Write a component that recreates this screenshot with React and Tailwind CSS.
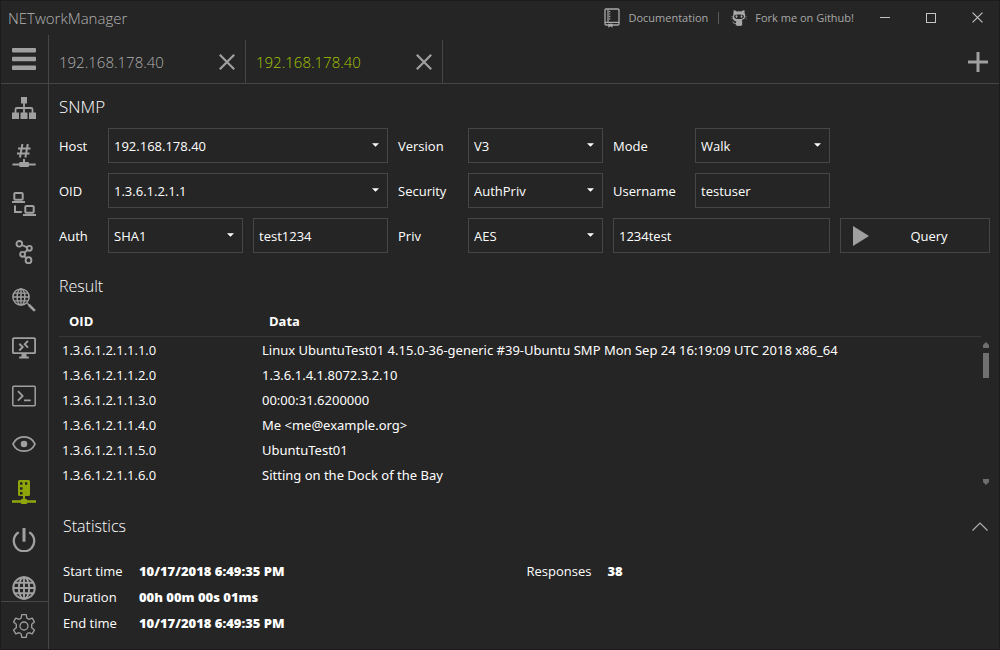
import { useState } from "react";

const LINE = "border-[#464646]";

function Svg({ children, size = "size-6", box = "0 0 24 24" }) {
  return (
    <svg viewBox={box} className={`${size} shrink-0`} fill="currentColor" aria-hidden="true">
      {children}
    </svg>
  );
}

const stroke = { fill: "none", stroke: "currentColor" };

const SitemapIcon = () => (
  <Svg>
    <path d="M9 1h6v6.500H9zM0 16.500h7V23H0zM8.500 16.500h7V23h-7zM17 16.500h7V23h-7z" />
    <path {...stroke} strokeWidth="1.800" d="M12 7v10M3.500 17v-3.500q0-1.500 1.500-1.500h14q1.500 0 1.500 1.500V17" />
  </Svg>
);

const SubnetIcon = () => (
  <Svg>
    <path {...stroke} strokeWidth="2" d="M10.400 0 8 13.500M15.800 0 13.400 13.500M6 4.500h12.500M5 9.500h12.500" />
    <path d="M11 15h2v3h3q1 0 1 1v.500h6.700v2H17v.500q0 1-1 1H8.200q-1 0-1-1v-.500H.500v-2h6.700V19q0-1 1-1H11z" />
  </Svg>
);

const ConnectionsIcon = () => (
  <Svg>
    <rect {...stroke} strokeWidth="2" x="2.300" y="1" width="8.400" height="6.800" rx="1" />
    <path d="M0 9h13v2H0zM11 22h13v2H11z" />
    <rect {...stroke} strokeWidth="2" x="13.300" y="14" width="8.400" height="6.800" rx="1" />
    <path {...stroke} strokeWidth="2" d="M3 13.500V20h6.800" />
  </Svg>
);

const RouteIcon = () => (
  <Svg>
    <g {...stroke} strokeWidth="1.900">
      <circle cx="7.300" cy="3.800" r="2.800" />
      <circle cx="17.400" cy="8.300" r="2.400" />
      <circle cx="10.600" cy="14.300" r="2.400" />
      <circle cx="16.500" cy="20.200" r="2.900" />
      <path d="m9.900 5 5.200 2.300M15.600 9.900l-3.200 2.800M12.200 16.100l2.200 2.100" />
    </g>
  </Svg>
);

const GlobeLines = () => (
  <>
    <circle cx="12" cy="12" r="10.800" />
    <ellipse cx="12" cy="12" rx="5.200" ry="10.800" />
    <path d="M12 1v22M1 12h22M2.800 6.800h18.400M2.800 17.200h18.400" />
  </>
);

const DnsSearchIcon = () => (
  <Svg>
    <g {...stroke} strokeWidth="1.900" transform="scale(.75)">
      <GlobeLines />
    </g>
    <path {...stroke} strokeWidth="1.600" d="m15.300 15.300 2 2" />
    <path {...stroke} strokeWidth="2.600" strokeLinecap="round" d="m17.500 17.500 4.600 4.600" />
  </Svg>
);

const RemoteDesktopIcon = () => (
  <Svg>
    <rect {...stroke} strokeWidth="1.800" x=".900" y="2.200" width="22.200" height="15" rx="1" />
    <path d="M9.500 18h5v2.500h2.300v2H7.200v-2h2.300z" />
    <path {...stroke} strokeWidth="1.900" d="m7.300 7.700 3.400 3.300L7.300 14.500M16 4.800l-3.300 3.400L16 11.600" />
  </Svg>
);

const ConsoleIcon = () => (
  <Svg>
    <rect {...stroke} strokeWidth="1.500" x=".800" y="2.300" width="22.400" height="19.400" rx="1" />
    <path {...stroke} strokeWidth="1.800" d="m6 7.200 4.600 4.800L6 16.600M12 16.300h6.700" />
  </Svg>
);

const EyeIcon = () => (
  <Svg>
    <path {...stroke} strokeWidth="1.800" d="M1 12C3 7.500 7 4.900 12 4.900S21 7.500 23 12c-2 4.500-6 7.100-11 7.100S3 16.500 1 12Z" />
    <circle cx="12" cy="12" r="3.300" />
  </Svg>
);

const SnmpIcon = () => (
  <Svg>
    <path
      fillRule="evenodd"
      d="M7.500 0h9Q18 0 18 1.500v13q0 1.500-1.500 1.500H13v3h1.500l1 1.200H24v2.600h-8.500l-1 1.200h-5l-1-1.200H0v-2.600h8.500l1-1.200H11v-3H7.500Q6 16 6 14.500v-13Q6 0 7.500 0ZM8 2.200v2.500h2.500V2.200ZM13 2.200v2.500h2.300V2.200ZM8 7.200v2.500h2.500V7.200ZM8 12v2.500h2.500V12Z"
    />
  </Svg>
);

const PowerIcon = () => (
  <Svg>
    <path {...stroke} strokeWidth="2.300" d="M6.700 4.300A10.200 10.200 0 1 0 17.300 4.300" />
    <path {...stroke} strokeWidth="3" d="M12 0v13.700" />
  </Svg>
);

const WebIcon = () => (
  <Svg>
    <g {...stroke} strokeWidth="1.900">
      <GlobeLines />
    </g>
  </Svg>
);

const GearIcon = () => (
  <Svg>
    <g {...stroke} strokeWidth="1.300" strokeLinejoin="round">
      <path d="M9.800.700h4.400l.7 3.500 1.900 1.100 3.400-1.200 2.200 3.800-2.700 2.300v3.600l2.700 2.300-2.200 3.800-3.400-1.200-1.900 1.100-.7 3.500H9.800l-.7-3.500-1.900-1.100-3.400 1.200-2.200-3.800 2.700-2.300v-3.600L1.600 7.900l2.200-3.800 3.400 1.200 1.900-1.100z" />
      <circle cx="12" cy="12" r="4" />
    </g>
  </Svg>
);

const BookIcon = () => (
  <Svg size="h-5 w-4" box="0 0 16 20">
    <rect {...stroke} strokeWidth="1.300" x="1" y="1" width="14" height="16" rx="1" />
    <path {...stroke} strokeWidth="1.200" d="M1 14.400h14M4 1.500v13" />
    <path d="M5 3h1.300v1.200H5zM5 5.400h1.300v1.200H5zM5 7.800h1.300V9H5zM5 10.200h1.300v1.200H5zM4.200 15.800h4.300V19.800L6.350 18.200 4.200 19.800z" />
  </Svg>
);

const OctocatIcon = () => (
  <Svg size="h-4 w-4" box="0 0 16 16">
    <path
      fillRule="evenodd"
      d="M2.600.200q1.900.1 3.200 1.200 2.200-.4 4.400 0Q11.500.300 13.400.200q.5 1.500.1 2.900 1 1.400.8 3.200-.3 3-3.600 3.700l.5 1.400V15.500h-1.200V12.500l-.6-.2v3.500H8.300v-3.300h-.6v3.300H6.600v-3.500l-.6.200v3h-1.200v-1.700q-2.100.3-2.900-1.300l-.7-.9q1.100-.1 1.700.9.600.8 1.900.5l.5-1.500q-3.300-.7-3.600-3.700-.2-1.800.8-3.200-.4-1.400.1-2.900ZM5 4.700q-1.900.1-1.900 2.100 0 2.300 4.900 2.300t4.900-2.300q0-2-1.900-2.100-3-.3-6 0Z"
    />
    <path d="M6 10h4v5.800H6z" />
    <ellipse cx="5.500" cy="6.600" rx=".9" ry="1.300" />
    <ellipse cx="10.500" cy="6.600" rx=".9" ry="1.300" />
    <path {...stroke} strokeWidth=".4" d="M0 6.600l2 .2M.2 9l2-.8M16 6.600l-2 .2M15.800 9l-2-.8" />
  </Svg>
);

const CloseIcon = ({ size, width }) => (
  <Svg size={size} box="0 0 16 16">
    <path {...stroke} strokeWidth={width} d="m.800.800 14.400 14.400M15.200.800.800 15.200" />
  </Svg>
);

const tools = [
  ["IP Scanner", SitemapIcon],
  ["Subnet Calculator", SubnetIcon],
  ["Connections", ConnectionsIcon],
  ["Traceroute", RouteIcon],
  ["DNS Lookup", DnsSearchIcon],
  ["Remote Desktop", RemoteDesktopIcon],
  ["PuTTY", ConsoleIcon],
  ["Monitor", EyeIcon],
  ["SNMP", SnmpIcon],
  ["Wake on LAN", PowerIcon],
  ["HTTP Headers", WebIcon],
];

const results = [
  ["1.3.6.1.2.1.1.1.0", "Linux UbuntuTest01 4.15.0-36-generic #39-Ubuntu SMP Mon Sep 24 16:19:09 UTC 2018 x86_64"],
  ["1.3.6.1.2.1.1.2.0", "1.3.6.1.4.1.8072.3.2.10"],
  ["1.3.6.1.2.1.1.3.0", "00:00:31.6200000"],
  ["1.3.6.1.2.1.1.4.0", "Me <me@example.org>"],
  ["1.3.6.1.2.1.1.5.0", "UbuntuTest01"],
  ["1.3.6.1.2.1.1.6.0", "Sitting on the Dock of the Bay"],
];

function Select({ id, value, label, className = "" }) {
  return (
    <div className={`grid items-center ${className}`}>
      <select
        id={id}
        aria-label={label}
        defaultValue={value}
        className={`col-start-1 row-start-1 h-[35px] w-full appearance-none border ${LINE} bg-transparent pr-6 pl-[5px]`}
      >
        <option>{value}</option>
      </select>
      <svg
        viewBox="0 0 8 4"
        className="pointer-events-none col-start-1 row-start-1 mr-[9px] mb-0.5 h-1 w-[7px] justify-self-end"
        fill="currentColor"
        aria-hidden="true"
      >
        <path d="M0 0h8L4 4z" />
      </svg>
    </div>
  );
}

function TextBox({ id, value, label, className = "" }) {
  return (
    <input
      id={id}
      aria-label={label}
      type="text"
      defaultValue={value}
      className={`h-[35px] w-full min-w-0 border ${LINE} bg-transparent px-[5px] ${className}`}
    />
  );
}

function Tab({ host, active }) {
  return (
    <div className={`flex w-[197px] items-center justify-between border-r ${LINE} pr-2.5 pl-2.5`}>
      <button
        type="button"
        role="tab"
        aria-selected={active}
        className={`text-[15px] font-light ${active ? "text-[#a4c400]" : "text-[#b0b0b0]"}`}
      >
        {host}
      </button>
      <button type="button" aria-label="Close tab" className="text-[#a0a0a0]">
        <CloseIcon size="size-4" width="2.200" />
      </button>
    </div>
  );
}

function Stat({ name, value }) {
  return (
    <div className="flex">
      <dt className="shrink-0">{name}</dt>
      <dd className="font-extrabold">{value}</dd>
    </div>
  );
}

export default function App() {
  const [open, setOpen] = useState(true);
  return (
    <div className="flex h-screen flex-col bg-[#252525] font-['Open_Sans','Noto_Sans',sans-serif] text-[13px] leading-5 text-white outline outline-1 -outline-offset-1 outline-[#1c1c1c]">
      <header className="flex h-[35px] shrink-0 items-center text-[#a8a8a8]">
        <span className="pl-2 text-[15px] font-light text-[#b4b4b4]">NETworkManager</span>
        <nav className="ml-auto flex items-center text-[11px]">
          <a href="#documentation" className="flex items-center gap-2">
            <BookIcon />
            Documentation
          </a>
          <span className="mr-3 ml-2.5 h-3 w-px bg-[#5a5a5a]" />
          <a href="#github" className="flex items-center gap-2">
            <OctocatIcon />
            Fork me on Github!
          </a>
        </nav>
        <div className="ml-2 flex text-[#c4c4c4]">
          <button type="button" aria-label="Minimize" className="flex h-8 w-[46px] items-center justify-center">
            <span className="h-px w-2.5 bg-current" />
          </button>
          <button type="button" aria-label="Maximize" className="flex h-8 w-[46px] items-center justify-center">
            <span className="size-2.5 border border-current" />
          </button>
          <button type="button" aria-label="Close" className="flex h-8 w-[46px] items-center justify-center">
            <CloseIcon size="size-[11px]" width="1.700" />
          </button>
        </div>
      </header>

      <div className="flex min-h-0 flex-1">
        <aside className={`flex w-[49px] shrink-0 flex-col border-r ${LINE} text-[#a0a0a0]`}>
          <button
            type="button"
            aria-label="Menu"
            className={`flex h-[49px] shrink-0 items-center justify-center border-b ${LINE}`}
          >
            <Svg>
              <rect y="1" width="24" height="4.400" rx=".8" />
              <rect y="9.800" width="24" height="4.400" rx=".8" />
              <rect y="18.600" width="24" height="4.400" rx=".8" />
            </Svg>
          </button>
          <nav className="min-h-0 flex-1 overflow-hidden">
            {tools.map(([name, Icon]) => (
              <button
                key={name}
                type="button"
                aria-label={name}
                className={`flex h-12 w-full items-center justify-center ${name === "SNMP" ? "text-[#8fa60a]" : ""}`}
              >
                <Icon />
              </button>
            ))}
          </nav>
          <button
            type="button"
            aria-label="Settings"
            className={`flex h-[49px] shrink-0 items-center justify-center border-t ${LINE}`}
          >
            <GearIcon />
          </button>
        </aside>

        <div className="flex min-w-0 flex-1 flex-col">
          <div className={`flex h-[49px] shrink-0 border-b ${LINE} pt-[5px]`} role="tablist">
            <Tab host="192.168.178.40" active={false} />
            <Tab host="192.168.178.40" active />
            <button type="button" aria-label="Add tab" className="mr-3 ml-auto text-[#a0a0a0]">
              <Svg size="size-5" box="0 0 20 20">
                <path d="M8.500 0h3v8.500H20v3h-8.500V20h-3v-8.500H0v-3h8.500z" />
              </Svg>
            </button>
          </div>

          <main className="flex min-h-0 flex-1 flex-col px-2.5 pt-3 pb-[17px]">
            <h1 className="text-[17px] leading-[22px] font-light">SNMP</h1>
            <form
              className="mt-2.5 grid grid-cols-[39px_minmax(0,1fr)_minmax(0,1fr)_60px_minmax(0,1fr)_72px_minmax(0,1fr)_150px] items-center gap-2.5"
              onSubmit={(e) => e.preventDefault()}
            >
              <label htmlFor="host">Host</label>
              <Select id="host" value="192.168.178.40" className="col-span-2" />
              <label htmlFor="version">Version</label>
              <Select id="version" value="V3" />
              <label htmlFor="mode">Mode</label>
              <Select id="mode" value="Walk" />

              <label htmlFor="oid" className="col-start-1">OID</label>
              <Select id="oid" value="1.3.6.1.2.1.1" className="col-span-2" />
              <label htmlFor="security">Security</label>
              <Select id="security" value="AuthPriv" />
              <label htmlFor="username">Username</label>
              <TextBox id="username" value="testuser" />

              <label htmlFor="auth" className="col-start-1">Auth</label>
              <Select id="auth" value="SHA1" />
              <TextBox id="auth-key" label="Auth password" value="test1234" />
              <label htmlFor="priv">Priv</label>
              <Select id="priv" value="AES" />
              <TextBox id="priv-key" label="Priv password" value="1234test" className="col-span-2" />
              <button type="submit" className={`flex h-[35px] items-center border ${LINE} pr-[30px] pl-3`}>
                <svg viewBox="0 0 16 20" className="h-5 w-4 text-[#a0a0a0]" fill="currentColor" aria-hidden="true">
                  <path d="M0 0l16 10L0 20z" />
                </svg>
                <span className="flex-1 pl-[30px] text-center">Query</span>
              </button>
            </form>

            <h2 className="mt-[22px] text-base leading-[22px] font-light">Result</h2>
            <div className="mt-2.5 flex min-h-0 flex-1">
              <div className="min-w-0 flex-1 overflow-hidden">
                <table className="w-full table-fixed border-collapse text-left">
                  <thead>
                    <tr className="h-[29px] border-b border-[#383838]">
                      <th className="w-[200px] px-2.5 font-bold">OID</th>
                      <th className="px-2.5 font-bold">Data</th>
                    </tr>
                  </thead>
                  <tbody>
                    {results.map(([oid, data]) => (
                      <tr key={oid} className="h-[25px]">
                        <td className="px-[3px] pt-0.5">{oid}</td>
                        <td className="truncate px-[3px] pt-0.5 font-['Noto_Sans','Open_Sans',sans-serif]">{data}</td>
                      </tr>
                    ))}
                  </tbody>
                </table>
              </div>
              <div className="mr-px ml-0.5 flex w-1.5 flex-col pt-[35px] pb-2.5 text-[#6e6e6e]" aria-hidden="true">
                <Svg size="h-1.5 w-1.5" box="0 0 6 6">
                  <path d="M3 0l3 3v3H0V3z" />
                </Svg>
                <span className="mt-[5px] h-[25px] bg-[#707070]" />
                <span className="flex-1" />
                <Svg size="h-1.5 w-1.5" box="0 0 6 6">
                  <path d="M0 0h6v3L3 6 0 3z" />
                </Svg>
              </div>
            </div>

            <section className="pl-1">
              <button
                type="button"
                aria-expanded={open}
                onClick={() => setOpen(!open)}
                className="mt-5 flex w-full items-center justify-between pr-0.5 text-base leading-[22px] font-light"
              >
                Statistics
                <svg
                  viewBox="0 0 16 9"
                  className="h-[9px] w-4 text-[#b0b0b0]"
                  fill="none"
                  stroke="currentColor"
                  strokeWidth="1.200"
                  aria-hidden="true"
                >
                  <path d="M.500 8.500 8 1l7.500 7.500" />
                </svg>
              </button>
              {open && (
                <div className="mt-6 grid grid-cols-2">
                  <dl className="flex flex-col gap-1.5 *:*:first:w-[76px]">
                    <Stat name="Start time" value="10/17/2018 6:49:35 PM" />
                    <Stat name="Duration" value="00h 00m 00s 01ms" />
                    <Stat name="End time" value="10/17/2018 6:49:35 PM" />
                  </dl>
                  <dl className="*:*:first:w-[81px]">
                    <Stat name="Responses" value="38" />
                  </dl>
                </div>
              )}
            </section>
          </main>
        </div>
      </div>
    </div>
  );
}
